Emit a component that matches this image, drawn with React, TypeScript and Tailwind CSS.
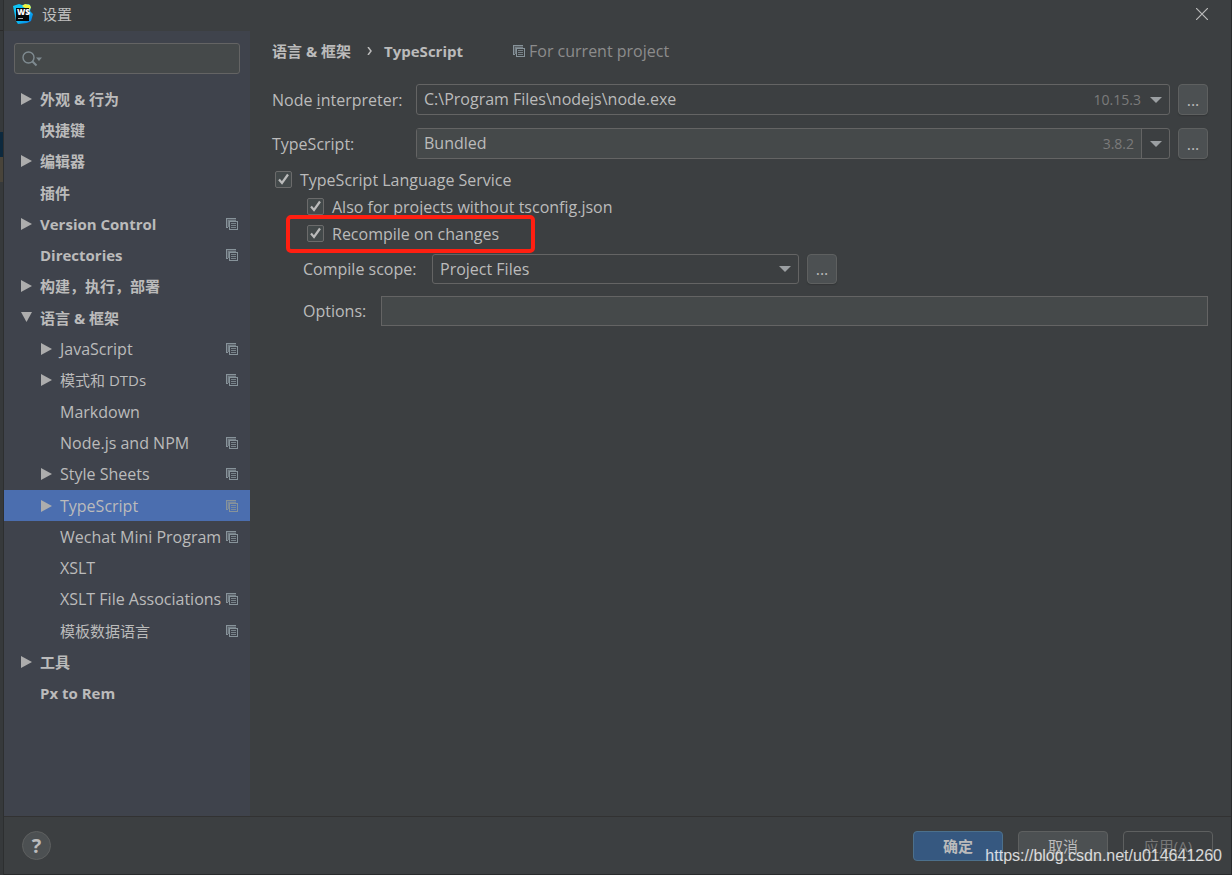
import { useState } from 'react';

type Item = {
  label: string;
  level: number;
  arrow?: 'right' | 'down';
  project?: boolean;
};

const items: Item[] = [
  { label: '外观 & 行为', level: 0, arrow: 'right' },
  { label: '快捷键', level: 0 },
  { label: '编辑器', level: 0, arrow: 'right' },
  { label: '插件', level: 0 },
  { label: 'Version Control', level: 0, arrow: 'right', project: true },
  { label: 'Directories', level: 0, project: true },
  { label: '构建，执行，部署', level: 0, arrow: 'right' },
  { label: '语言 & 框架', level: 0, arrow: 'down' },
  { label: 'JavaScript', level: 1, arrow: 'right', project: true },
  { label: '模式和 DTDs', level: 1, arrow: 'right', project: true },
  { label: 'Markdown', level: 1 },
  { label: 'Node.js and NPM', level: 1, project: true },
  { label: 'Style Sheets', level: 1, arrow: 'right', project: true },
  { label: 'TypeScript', level: 1, arrow: 'right', project: true },
  { label: 'Wechat Mini Program', level: 1, project: true },
  { label: 'XSLT', level: 1 },
  { label: 'XSLT File Associations', level: 1, project: true },
  { label: '模板数据语言', level: 1, project: true },
  { label: '工具', level: 0, arrow: 'right' },
  { label: 'Px to Rem', level: 0 },
];

// Chinese glyphs look larger than Latin ones at the same size
const isCjk = (text: string) => /[\u4e00-\u9fff]/.test(text);

function ProjectIcon() {
  return (
    <svg width="12" height="12" viewBox="0 0 12 12" fill="#87939a" shapeRendering="crispEdges" className="shrink-0">
      <path d="M0 0h10v1H1v8h1v1H0z" />
      <path d="M1 1h9v1H2v7H1z" fillOpacity=".35" />
      <path d="M2 2h8v1H3v6H2z" fillOpacity=".75" />
      <path d="M4 3h8v9H3V3zM4 4v7h7V4z" fillRule="evenodd" />
      <path d="M5 5h5v1H5zM5 7h5v1H5zM5 9h5v1H5z" fillOpacity=".8" />
    </svg>
  );
}

function TreeArrow({ dir }: { dir?: 'right' | 'down' }) {
  return (
    <svg width="12" height="12" viewBox="0 0 12 12" fill="#adadad" className="shrink-0">
      {dir === 'right' && <path d="M1 0v12l11-6z" />}
      {dir === 'down' && <path d="M1 0h11L6.500 10z" />}
    </svg>
  );
}

function DropArrow() {
  return (
    <svg width="12" height="6" viewBox="0 0 12 6" fill="#9b9fa2">
      <path d="M0 0h12L6 6z" />
    </svg>
  );
}

function Logo() {
  return (
    <svg width="20" height="20" viewBox="0 0 20 20">
      <defs>
        <linearGradient id="ws" x1="0" y1="0" x2="1" y2="1">
          <stop offset="0" stopColor="#12c8f4" />
          <stop offset=".6" stopColor="#08b4f2" />
          <stop offset="1" stopColor="#0a6fe0" />
        </linearGradient>
      </defs>
      <path d="M0 2L6 0l3 1 7-1 2 3-1 4 3 3-2 7-4 2-9 1-2-3z" fill="url(#ws)" />
      <path d="M9 2l3-2 5 1 1 3-3 2z" fill="#f2f23c" />
      <path d="M3 4h13v13H3z" fill="#060808" />
      <path d="M5 14.500h5" stroke="#aaa" />
      <text x="4" y="11" fontSize="8" fontWeight="800" fill="#fff" fontFamily="Open Sans, sans-serif">WS</text>
    </svg>
  );
}

function Check({ label, className }: { label: string; className?: string }) {
  const [on, setOn] = useState(true);
  return (
    <label className={`flex h-[27px] items-center gap-2 self-start ${className ?? ''}`}>
      <span className="relative size-[17px]">
        <input
          type="checkbox"
          checked={on}
          onChange={() => setOn(!on)}
          className="block size-[17px] appearance-none rounded-[2px] border border-[#6b6b6b] bg-[#43494a]"
        />
        {on && (
          <svg width="17" height="17" viewBox="0 0 17 17" fill="none" stroke="#bbb" strokeWidth="2.200" className="pointer-events-none absolute inset-0">
            <path d="M4 8.500l3 3.500 6-8.500" />
          </svg>
        )}
      </span>
      {label}
    </label>
  );
}

function More({ label }: { label: string }) {
  return (
    <button aria-label={label} className="h-full w-[30px] shrink-0 rounded-[4px] border border-[#5e6060] bg-[#4c5052] leading-none shadow-[0_1px_1px_#333638]">
      ...
    </button>
  );
}

export default function App() {
  const [selected, setSelected] = useState('TypeScript');

  return (
    <div className="relative flex h-screen bg-[#3c3f41] font-['Open_Sans','Noto_Sans_CJK_SC',sans-serif] text-[15px] leading-5 text-[#bbbbbb]">
      {/* sliver of the editor behind the dialog */}
      <div className="flex w-1 shrink-0 flex-col border-r border-[#2d2f30] bg-[#36393b]">
        <div className="h-[31px] border-b border-[#2b2b2b]" />
        <div className="mt-[101px] h-[25px] bg-[#0d293e]" />
        <div className="h-[25px] bg-[#49443a]" />
      </div>

      <div className="flex min-w-0 flex-1 flex-col border-r border-b border-[#292b2c]">
        <header className="flex h-[31px] shrink-0 items-center gap-[9px] pr-[23px] pb-1 pl-[9px]">
          <Logo />
          <span className="text-[#bfbfbf]">设置</span>
          <button aria-label="Close" className="ml-auto">
            <svg width="12" height="12" viewBox="0 0 12 12" stroke="#bbb" strokeWidth="1.200">
              <path d="M0 0l12 12M12 0L0 12" />
            </svg>
          </button>
        </header>

        <div className="flex min-h-0 flex-1">
          <nav className="w-[246px] shrink-0 overflow-hidden bg-[#3f434c] pt-3">
            <div className="relative mx-[10px] mb-[9px]">
              <input aria-label="Search" className="block h-[31px] w-full rounded-[3px] border border-[#646464] bg-[#45494a] pl-8 outline-none" />
              <svg width="20" height="16" viewBox="0 0 20 16" fill="none" stroke="#7f8b91" strokeWidth="1.400" className="pointer-events-none absolute top-2 left-2">
                <circle cx="6.500" cy="6.500" r="5.500" />
                <path d="M10.500 10.500l4 4" strokeWidth="2" />
                <path d="M14 6.500h6l-3 3.500z" fill="#7f8b91" stroke="none" />
              </svg>
            </div>
            <ul className="grid h-[626px] auto-rows-fr grid-cols-1">
              {items.map((item) => (
                <li key={item.label}>
                  <button
                    onClick={() => setSelected(item.label)}
                    className={`flex h-full w-full items-center gap-2 pr-3 text-left whitespace-nowrap ${
                      item.level === 0 ? 'pl-4 font-bold' : 'pl-9'
                    } ${item.level === 1 && !isCjk(item.label) ? 'text-base leading-5' : ''} ${
                      selected === item.label ? 'bg-[#4b6eaf]' : ''
                    }`}
                  >
                    <TreeArrow dir={item.arrow} />
                    <span className="min-w-0 flex-1">{item.label}</span>
                    {item.project && <ProjectIcon />}
                  </button>
                </li>
              ))}
            </ul>
          </nav>

          <main className="flex min-w-0 flex-1 flex-col pr-[23px] pl-[22px] text-base leading-5">
            <div className="mb-[13px] flex h-10 items-center text-[15px] leading-5 font-bold">
              <span>语言 &amp; 框架</span>
              <svg width="5" height="8" viewBox="0 0 5 8" fill="none" stroke="#bbb" strokeWidth="1.500" className="mr-3 ml-4">
                <path d="M1 0l3 4-3 4" />
              </svg>
              <span>TypeScript</span>
              <span className="ml-[50px] flex items-center gap-1 text-base leading-5 font-normal text-[#8c8c8c]">
                <ProjectIcon />
                For current project
              </span>
            </div>

            <div className="mb-[13px] flex h-[31px] items-center">
              <label htmlFor="node" className="w-36 shrink-0">
                Node <span className="underline underline-offset-2">i</span>nterpreter:
              </label>
              <div className="relative mr-2 h-full flex-1">
                <select id="node" className="h-full w-full appearance-none rounded-[3px] border border-[#646464] bg-[#3c3f41] px-[7px] pb-px">
                  <option>C:\Program Files\nodejs\node.exe</option>
                </select>
                <span className="pointer-events-none absolute inset-y-0 right-2 flex items-center gap-[9px] text-sm text-[#7b7b7b]">
                  10.15.3
                  <DropArrow />
                </span>
              </div>
              <More label="Choose interpreter" />
            </div>

            <div className="mb-[7px] flex h-[31px] items-center">
              <label htmlFor="ts" className="w-36 shrink-0">TypeScript:</label>
              <div className="mr-2 flex h-full flex-1 rounded-[3px] border border-[#646464]">
                <div className="flex flex-1 items-center bg-[#45494a] pr-[7px]">
                  <input id="ts" defaultValue="Bundled" className="h-full min-w-0 flex-1 px-[7px] pb-px outline-none" />
                  <span className="text-sm text-[#7b7b7b]">3.8.2</span>
                </div>
                <button aria-label="Show versions" className="flex w-7 items-center justify-center border-l border-[#646464]">
                  <DropArrow />
                </button>
              </div>
              <More label="Choose package" />
            </div>

            <Check label="TypeScript Language Service" className="ml-[3px]" />
            <Check label="Also for projects without tsconfig.json" className="ml-[35px]" />
            <div className="relative mb-[7px] flex self-start">
              <Check label="Recompile on changes" className="ml-[35px]" />
              <div className="pointer-events-none absolute -top-[5px] -right-9 -bottom-[6px] left-[14px] rounded-[5px] border-4 border-[#ff1f11]" />
            </div>

            <div className="mb-3 ml-[31px] flex h-[30px] items-center">
              <label htmlFor="scope" className="w-[129px] shrink-0">Compile scope:</label>
              <div className="relative mr-2 h-full w-[367px]">
                <select id="scope" className="h-full w-full appearance-none rounded-[3px] border border-[#646464] bg-[#3c3f41] px-[7px]">
                  <option>Project Files</option>
                </select>
                <span className="pointer-events-none absolute inset-y-0 right-2 flex items-center">
                  <DropArrow />
                </span>
              </div>
              <More label="Edit scopes" />
            </div>

            <div className="ml-[31px] flex h-[30px] items-center">
              <label htmlFor="options" className="w-[78px] shrink-0">Options:</label>
              <input id="options" className="h-full min-w-0 flex-1 border border-[#646464] bg-[#45494a] px-[7px] outline-none" />
            </div>
          </main>
        </div>

        <footer className="flex h-[58px] shrink-0 items-center gap-[15px] border-t border-[#323232] pr-[18px] pl-[18px]">
          <button aria-label="Help" className="mr-auto flex size-[29px] items-center justify-center rounded-full border border-[#5e6060] bg-[#4c5052] text-xl font-bold">
            ?
          </button>
          <button className="h-[30px] w-[90px] rounded-[4px] border border-[#4c708c] bg-[#365880] font-bold">确定</button>
          <button className="h-[30px] w-[90px] rounded-[4px] border border-[#5e6060] bg-[#4c5052]">取消</button>
          <button className="h-[30px] w-[90px] rounded-[4px] border border-[#5e6060] text-[#777777]">应用(A)</button>
        </footer>
      </div>

      <div className="pointer-events-none absolute right-[10px] bottom-[7px] font-['Liberation_Sans',sans-serif] text-base text-white/80">
        https://blog.csdn.net/u014641260
      </div>
    </div>
  );
}
